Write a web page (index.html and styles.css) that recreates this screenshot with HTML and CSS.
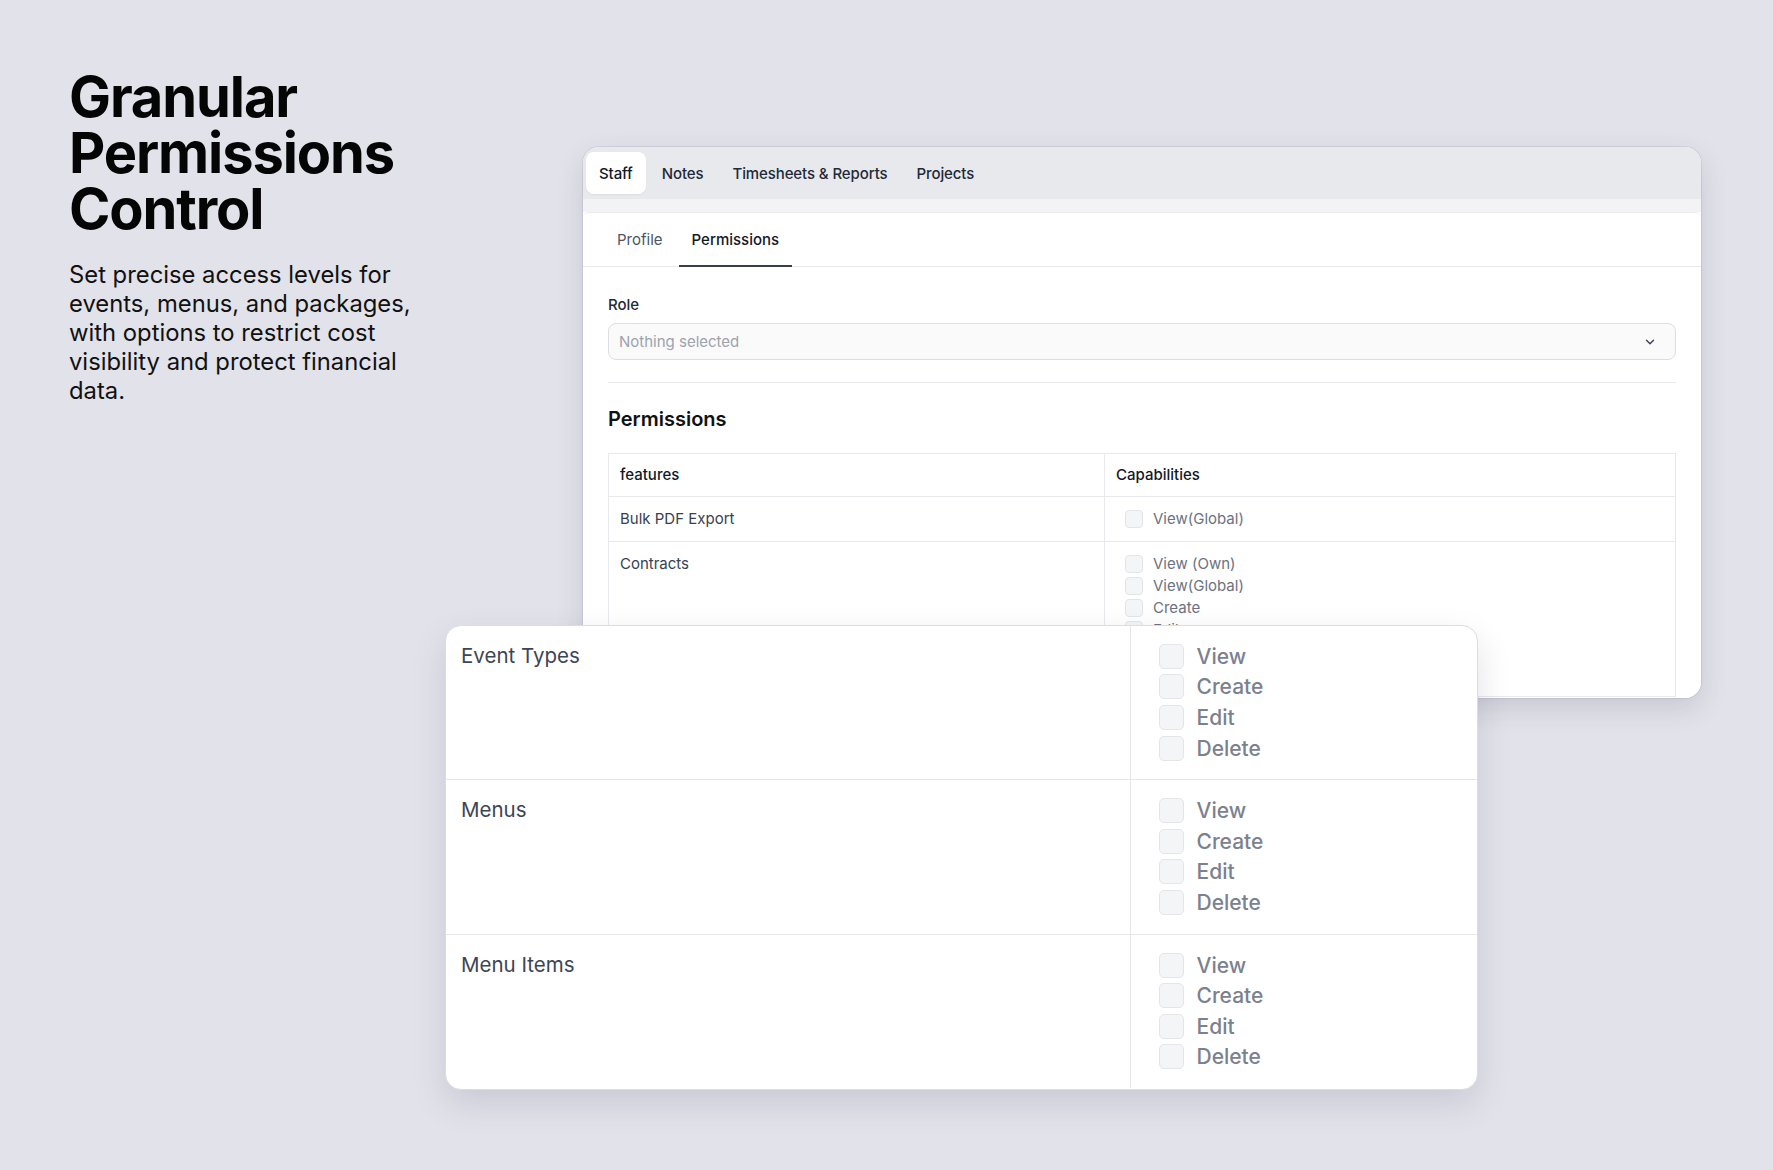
FILE: index.html
```html
<!DOCTYPE html>
<html lang="en">
<head>
<meta charset="utf-8">
<title>Granular Permissions Control</title>
<link rel="stylesheet" href="styles.css">
</head>
<body>
<main class="page">
  <section class="intro">
    <h1 class="title">Granular Permissions Control</h1>
    <p class="lead">Set precise access levels for events, menus, and packages, with options to restrict cost visibility and protect financial data.</p>
  </section>

  <section class="stage">
    <div class="window">
      <nav class="tabs">
        <span class="tab active">Staff</span>
        <span class="tab">Notes</span>
        <span class="tab">Timesheets &amp; Reports</span>
        <span class="tab">Projects</span>
      </nav>
      <div class="strip"></div>
      <div class="panel">
        <nav class="subtabs">
          <span class="subtab">Profile</span>
          <span class="subtab current">Permissions</span>
        </nav>
        <div class="content">
          <label class="field-label">Role</label>
          <div class="select">
            <span class="placeholder">Nothing selected</span>
            <svg class="chevron" width="14" height="14" viewBox="0 0 24 24" fill="none" stroke="#374151" stroke-width="2.4" stroke-linecap="round" stroke-linejoin="round"><polyline points="6 9 12 15 18 9"/></svg>
          </div>
          <hr class="divider">
          <h2 class="section-title">Permissions</h2>
          <table class="perm-table">
            <colgroup><col class="col-feature"><col></colgroup>
            <tr><th>features</th><th>Capabilities</th></tr>
            <tr>
              <td class="feature">Bulk PDF Export</td>
              <td><div class="caps"><div class="cap"><span class="box"></span>View(Global)</div></div></td>
            </tr>
            <tr>
              <td class="feature">Contracts</td>
              <td>
                <div class="caps">
                  <div class="cap"><span class="box"></span>View (Own)</div>
                  <div class="cap"><span class="box"></span>View(Global)</div>
                  <div class="cap"><span class="box"></span>Create</div>
                  <div class="cap"><span class="box"></span>Edit</div>
                  <div class="cap"><span class="box"></span>Delete</div>
                  <div class="cap"><span class="box"></span>Export</div>
                </div>
              </td>
            </tr>
          </table>
        </div>
      </div>
    </div>

    <div class="zoom-card">
      <table class="big-table">
        <colgroup><col class="col-big-feature"><col></colgroup>
        <tr>
          <td class="big-feature">Event Types</td>
          <td class="big-caps">
            <div class="bcap"><span class="bbox"></span>View</div>
            <div class="bcap"><span class="bbox"></span>Create</div>
            <div class="bcap"><span class="bbox"></span>Edit</div>
            <div class="bcap"><span class="bbox"></span>Delete</div>
          </td>
        </tr>
        <tr>
          <td class="big-feature">Menus</td>
          <td class="big-caps">
            <div class="bcap"><span class="bbox"></span>View</div>
            <div class="bcap"><span class="bbox"></span>Create</div>
            <div class="bcap"><span class="bbox"></span>Edit</div>
            <div class="bcap"><span class="bbox"></span>Delete</div>
          </td>
        </tr>
        <tr>
          <td class="big-feature">Menu Items</td>
          <td class="big-caps">
            <div class="bcap"><span class="bbox"></span>View</div>
            <div class="bcap"><span class="bbox"></span>Create</div>
            <div class="bcap"><span class="bbox"></span>Edit</div>
            <div class="bcap"><span class="bbox"></span>Delete</div>
          </td>
        </tr>
      </table>
    </div>
  </section>
</main>
</body>
</html>
```
FILE: styles.css
```css
* { box-sizing: border-box; }

html, body {
  margin: 0;
  background: #e2e3ea;
  font-family: Inter, "Noto Sans", "Liberation Sans", sans-serif;
}

.page {
  display: flex;
  align-items: flex-start;
  padding: 69px 0 0 69px;
  min-height: 1170px;
}

.intro {
  width: 352px;
  flex: none;
}

.title {
  margin: 0;
  font-size: 56px;
  line-height: 56px;
  font-weight: 700;
  color: #050505;
  letter-spacing: -1.1px;
}

.lead {
  margin: 23px 0 0;
  font-size: 23.8px;
  line-height: 29px;
  color: #111;
}

.stage {
  position: relative;
  margin: 78px 0 0 162px;
}

.window {
  width: 1118px;
  height: 551px;
  background: #fff;
  border-radius: 16px;
  overflow: hidden;
  display: flex;
  flex-direction: column;
  box-shadow: 0 0 0 1px rgba(30, 30, 60, 0.07), 0 10px 28px rgba(30, 30, 60, 0.14);
}

.tabs {
  display: flex;
  gap: 3px;
  padding: 5px 3px;
  height: 52px;
  flex: none;
  background: #e8e9ed;
}

.tab {
  display: flex;
  align-items: center;
  height: 42px;
  padding: 0 13px;
  font-size: 15px;
  font-weight: 500;
  letter-spacing: -0.1px;
  color: #1f2937;
  border-radius: 8px;
}

.tab.active {
  background: #fff;
  color: #111827;
  box-shadow: 0 1px 2px rgba(0, 0, 0, 0.05);
}

.strip {
  height: 13px;
  flex: none;
  background: #f3f3f5;
}

.panel {
  flex: 1;
  background: #fff;
  border-top: 1px solid #ebebee;
  border-radius: 6px 6px 0 0;
}

.subtabs {
  display: flex;
  gap: 3px;
  height: 54px;
  padding: 0 21px;
  border-bottom: 1px solid #e8e9ec;
}

.subtab {
  display: flex;
  align-items: center;
  padding: 0 13px;
  font-size: 15px;
  color: #4b5563;
  border-bottom: 2px solid transparent;
  margin-bottom: -1px;
}

.subtab.current {
  color: #111827;
  font-weight: 500;
  border-bottom-color: #3a3f4b;
}

.content {
  padding: 27px 25px 0;
}

.field-label {
  display: block;
  font-size: 15px;
  line-height: 22px;
  font-weight: 500;
  color: #1f2937;
}

.select {
  margin-top: 7px;
  height: 37px;
  display: flex;
  align-items: center;
  justify-content: space-between;
  padding: 0 18px 0 10px;
  background: #fafafa;
  border: 1px solid #dcdee3;
  border-radius: 8px;
}

.placeholder {
  font-size: 15px;
  color: #9ca3af;
}

.chevron { display: block; }

.divider {
  margin: 22px 0 0;
  border: 0;
  border-top: 1px solid #ebecef;
}

.section-title {
  margin: 22px 0 0;
  font-size: 20px;
  line-height: 28px;
  font-weight: 600;
  color: #111;
}

.perm-table {
  margin-top: 20px;
  width: 100%;
  border-collapse: collapse;
}

.col-feature { width: 496px; }

.perm-table th,
.perm-table td {
  border: 1px solid #e8e9ec;
  padding: 11px;
  text-align: left;
  vertical-align: top;
  font-size: 15px;
  line-height: 22px;
}

.perm-table th {
  font-weight: 500;
  color: #111827;
  padding-top: 10px;
  padding-bottom: 10px;
}

.perm-table td.feature {
  color: #374151;
}

.caps {
  display: flex;
  flex-direction: column;
}

.cap {
  display: flex;
  align-items: center;
  gap: 10px;
  height: 22px;
  padding-left: 9px;
  color: #6b7280;
}

.box {
  width: 18px;
  height: 18px;
  flex: none;
  border: 1px solid #e2e4e8;
  border-radius: 4px;
  background: #f4f5f7;
}

.zoom-card {
  position: absolute;
  left: -138px;
  top: 478px;
  width: 1033px;
  height: 465px;
  background: #fff;
  border: 1px solid #dcdde3;
  border-radius: 16px;
  overflow: hidden;
  box-shadow: 0 14px 34px rgba(30, 30, 60, 0.13);
}

.big-table {
  width: 100%;
  border-collapse: collapse;
}

.col-big-feature { width: 684px; }

.big-table td {
  vertical-align: top;
  border-bottom: 1px solid #e6e7eb;
  padding: 15px 0 16px 15px;
}

.big-table tr:last-child td { border-bottom: 0; }

.big-feature {
  border-right: 1px solid #e6e7eb;
  font-size: 20.5px;
  line-height: 30.6px;
  color: #3d4555;
}

.big-table td.big-caps {
  padding-left: 28px;
}

.bcap {
  display: flex;
  align-items: center;
  gap: 13px;
  height: 30.6px;
  font-size: 21px;
  font-weight: 500;
  color: #7b818e;
}

.bbox {
  width: 25px;
  height: 25px;
  flex: none;
  border: 1.5px solid #e3e5e9;
  border-radius: 5px;
  background: #f4f5f7;
}
```
